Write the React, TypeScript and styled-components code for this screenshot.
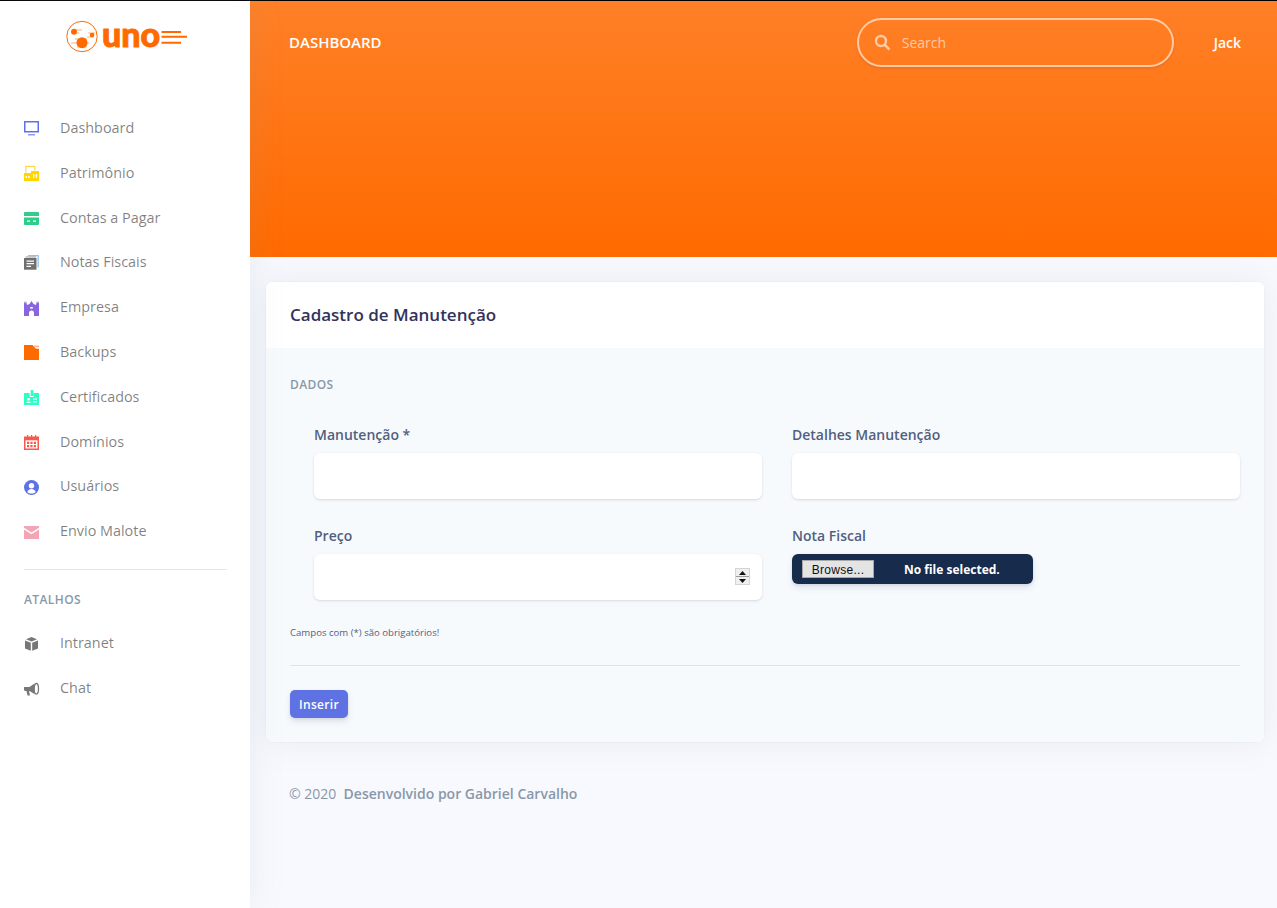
import * as React from 'react'
import styled, { createGlobalStyle } from 'styled-components'

const GlobalStyle = createGlobalStyle`
  html, body {
    margin: 0;
    padding: 0;
    background: #f8f9fe;
    font-family: "Open Sans", "Liberation Sans", sans-serif;
    overflow: hidden;
  }
  * { box-sizing: border-box; }
`

const Page = styled.div`
  display: grid;
  grid-template-columns: 250px 1fr;
  height: 908px;
  border-top: 1px solid #000;
`

const Sidebar = styled.aside`
  background: #fff;
  box-shadow: 0 0 32px rgba(136, 152, 170, 0.15);
  display: flex;
  flex-direction: column;
  z-index: 1;
`

const LogoBox = styled.div`
  height: 104.1px;
  padding: 7px 0 0 66px;
`

const NavItem = styled.a`
  display: flex;
  align-items: center;
  height: 44.8px;
  padding-left: 24px;
  font-size: 14.4px;
  color: rgba(0, 0, 0, 0.5);
`

const NavIcon = styled.span`
  display: flex;
  width: 36px;
  flex: none;
  margin-top: 2px;
`

const Divider = styled.hr`
  border: 0;
  border-top: 1px solid #e4e6ea;
  margin: 16.4px 23px 0 24px;
`

const NavHeading = styled.h6`
  margin: 0;
  padding: 22px 24px 12px;
  font-size: 12px;
  line-height: 16px;
  font-weight: 600;
  letter-spacing: 0.4px;
  color: #8898aa;
`

const Main = styled.main`
  display: flex;
  flex-direction: column;
  min-width: 0;
`

const Banner = styled.header`
  height: 256px;
  background: linear-gradient(180deg, #ff8027 0%, #ff6a00 100%);
  display: flex;
  align-items: flex-start;
  padding: 17px 36px 0 39px;
`

const BannerTitle = styled.div`
  flex: 1;
  line-height: 49px;
  font-size: 15px;
  font-weight: 600;
  color: #fff;
`

const SearchBox = styled.div`
  width: 317px;
  height: 49px;
  border: 2px solid rgba(255, 255, 255, 0.6);
  border-radius: 25px;
  display: flex;
  align-items: center;
  gap: 11px;
  padding-left: 15px;
  color: rgba(255, 255, 255, 0.6);
  font-size: 14px;
  box-shadow: 0 1px 3px rgba(50, 50, 93, 0.15);
`

const UserName = styled.div`
  margin-left: 40px;
  line-height: 50px;
  font-size: 14px;
  font-weight: 600;
  color: #fff;
`

const Content = styled.div`
  padding: 25px 13px 0 16px;
`

const Card = styled.section`
  height: 460px;
  background: #f7fafd;
  border-radius: 6px;
  box-shadow: 0 0 32px rgba(136, 152, 170, 0.15), 0 0 0 1px rgba(0, 0, 0, 0.015);
  overflow: hidden;
`

const CardHead = styled.div`
  height: 66px;
  background: #fff;
  padding: 0 24px 2px;
  display: flex;
  align-items: center;
`

const CardTitle = styled.h3`
  margin: 0;
  font-size: 17px;
  font-weight: 600;
  color: #32325d;
`

const CardBody = styled.div`
  padding: 29px 24px 0 24px;
`

const SectionLabel = styled.h6`
  margin: 0;
  font-size: 12px;
  line-height: 16px;
  font-weight: 600;
  letter-spacing: 0.4px;
  color: #8898aa;
`

const FormGrid = styled.div`
  display: grid;
  grid-template-columns: 448px 448px;
  column-gap: 30px;
  row-gap: 27px;
  padding: 32px 0 0 24px;
`

const Field = styled.div`
  display: flex;
  flex-direction: column;
  align-items: flex-start;
`

const Label = styled.label`
  font-size: 14px;
  line-height: 20px;
  font-weight: 600;
  color: #525f7f;
  margin-bottom: 8px;
`

const InputWrap = styled.div`
  position: relative;
  width: 100%;
  height: 46px;
  background: #fff;
  border-radius: 6px;
  box-shadow: 0 1px 3px rgba(50, 50, 93, 0.15), 0 1px 0 rgba(0, 0, 0, 0.02);
`

const TextInput = styled.input`
  width: 100%;
  height: 100%;
  border: 0;
  background: transparent;
  padding: 0 12px;
  outline: none;
`

const Spinner = styled.span`
  position: absolute;
  right: 12px;
  top: 14px;
  width: 15px;
  height: 17px;
  background: #e2e2e2;
  border: 1px solid #d4d4d4;
  display: flex;
  flex-direction: column;
`

const SpinPart = styled.span`
  flex: 1;
  background: #efefef;
  display: flex;
  align-items: center;
  justify-content: center;
  & + & { border-top: 1px solid #9a9a9a; }
`

const FileBox = styled.div`
  width: 241px;
  height: 30px;
  background: #172b4d;
  border-radius: 6px;
  display: flex;
  align-items: center;
  padding-left: 10px;
  box-shadow: 0 4px 6px rgba(50, 50, 93, 0.11), 0 1px 3px rgba(0, 0, 0, 0.08);
`

const BrowseButton = styled.span`
  width: 72px;
  height: 18px;
  background: #e4e4e4;
  border: 1px solid #a8a8a8;
  font-family: "Liberation Sans", Arial, sans-serif;
  font-size: 12px;
  line-height: 18px;
  text-align: center;
  color: #111;
  letter-spacing: 0.3px;
`

const FileText = styled.span`
  margin-left: 30px;
  color: #fff;
  font-size: 12px;
  font-weight: 700;
`

const Note = styled.p`
  margin: 26px 0 0;
  font-size: 9.6px;
  line-height: 14px;
  color: #525f7f;
`

const FormRule = styled.hr`
  border: 0;
  border-top: 1px solid #dfe3e8;
  margin: 25px 0 24px;
`

const SubmitButton = styled.button`
  display: block;
  width: 58px;
  height: 28px;
  border: 0;
  border-radius: 5px;
  padding: 0;
  background: #5e72e4;
  color: #fff;
  font-family: inherit;
  font-size: 12px;
  font-weight: 600;
  letter-spacing: 0.3px;
  box-shadow: 0 4px 6px rgba(50, 50, 93, 0.11), 0 1px 3px rgba(0, 0, 0, 0.08);
`

const Footer = styled.footer`
  padding: 42px 0 0 23px;
  font-size: 14px;
  line-height: 20px;
  color: #8898aa;
  white-space: pre;
`

const FooterStrong = styled.strong`
  font-weight: 600;
`

const Logo = () => (
  <svg width="124" height="48" viewBox="0 -10 124 48">
    <circle cx="16" cy="18.5" r="15.2" fill="none" stroke="#ff6a00" strokeWidth="1" />
    <path d="M10 12h6M10 15h3M29 15h-7M28 19h-7M21 21h-12M23 25h-18M21 29h-10" stroke="#ffb07c" strokeWidth="1" />
    <circle cx="8" cy="13.700" r="3" fill="#ff6a00" />
    <circle cx="26" cy="17" r="2.300" fill="#ff6a00" />
    <circle cx="16" cy="24.700" r="5.500" fill="#ff6a00" />
    <text x="36" y="28.500" fontFamily="Lato, sans-serif" fontWeight="900" fontSize="34" fill="#ff6a00" stroke="#ff6a00" strokeWidth="0.9">
      uno
    </text>
    <path d="M95.500 14h19.500M95.500 18.700h25.500M95.500 24.700h19.500" stroke="#ff6a00" strokeWidth="2" />
  </svg>
)

const Svg = ({ children }: { children: React.ReactNode }) => (
  <svg width="16" height="16" viewBox="0 0 16 16" style={{ overflow: 'visible' }}>{children}</svg>
)

const IconMonitor = () => (
  <Svg>
    <rect x="0.750" y="1.750" width="13.500" height="10" fill="#fff" stroke="#5e72e4" strokeWidth="1.500" />
    <rect x="4" y="14" width="7" height="1.500" fill="#8b9aee" />
  </Svg>
)
const IconBuilding = () => (
  <Svg>
    <path d="M1.800 7.500V1.300h9V5.500" fill="none" stroke="#ffd84a" strokeWidth="1.200" />
    <path d="M0 8h7v8H0zM7 6h8v10H7z" fill="#ffd600" />
    <path d="M1.500 11h1.500v2H1.500zM4.200 11h1.500v2H4.200zM9 9h1.300v4H9zM11.800 9h1.300v4h-1.300z" fill="#fff" />
  </Svg>
)
const IconCard = () => (
  <Svg>
    <path d="M1 2h13a1 1 0 0 1 1 1v3H0V3a1 1 0 0 1 1-1zM0 7.500h15V14a1 1 0 0 1-1 1H1a1 1 0 0 1-1-1z" fill="#2dce89" />
    <path d="M3 10.500h3v1.200H3zM9 10.500h3v1.200H9z" fill="#fff" />
  </Svg>
)
const IconNotes = () => (
  <Svg>
    <path d="M13 0h1.800v12.500H13.500V1.300H4V0z" fill="#8ec4ee" />
    <path d="M1.500 1.500h10.500v1H1.500z" fill="#999" />
    <rect x="0" y="3" width="12.500" height="11.700" fill="#6f6f6f" />
    <path d="M2.500 5.500h7.500v1.200H2.500zM2.500 8h7.500v1.200H2.500zM2.500 10.700h4.500v1.200H2.500z" fill="#fff" />
  </Svg>
)
const IconCastle = () => (
  <Svg>
    <path d="M0 1l1 2.500L2 1l1 4 2.500-1L7.500 1l2 3L12 5l1-4 1 2.500L15 1v15H10v-3a2.500 2.500 0 0 0-5 0v3H0z" fill="#8965e0" />
    <path d="M6.200 7h2.600v1.600H6.200z" fill="#fff" />
  </Svg>
)
const IconFolder = () => (
  <Svg>
    <path d="M0 1h8.500l3.500 3.800h3V16H0z" fill="#ff6a00" />
    <path d="M9.500 1.500H15v1.800h-4z" fill="#ffb58a" />
  </Svg>
)
const IconBadge = () => (
  <Svg>
    <path d="M6.700 1h2.600v6H6.700z" fill="#2bffc6" />
    <path d="M0 4h5.500v4h4V4H15v12H0z" fill="#2bffc6" />
    <circle cx="4.500" cy="10.300" r="1.400" fill="#fff" />
    <path d="M2.500 12.800h4v1.200h-4zM9 9.500h4v1.200H9zM9 12.300h4v1.300H9z" fill="#fff" />
  </Svg>
)
const IconCalendar = () => (
  <Svg>
    <path d="M0 2.500h15V16H0z" fill="#f7594e" />
    <path d="M3 1h1.200v2H3zM7 1h1.200v2H7zM11 1h1.200v2H11z" fill="#f7594e" />
    <path d="M1.500 6.300h12v8.200h-12z" fill="#fff" />
    <path d="M3 7.800h2.200V10H3zM6.400 7.800h2.200V10H6.400zM9.800 7.800H12V10H9.800zM3 11h2.200v2.200H3zM6.400 11h2.200v2.200H6.400zM9.800 11H12v2.200H9.800z" fill="#f7594e" />
  </Svg>
)
const IconUser = () => (
  <Svg>
    <circle cx="7.500" cy="8.500" r="7.500" fill="#5e72e4" />
    <circle cx="7.500" cy="6.700" r="2.700" fill="#fff" />
    <path d="M3.300 13c.6-2 2.300-3 4.200-3s3.600 1 4.200 3c-1 1-2.600 1.600-4.200 1.600s-3.200-.6-4.200-1.600z" fill="#fff" />
  </Svg>
)
const IconMail = () => (
  <Svg>
    <path d="M0 2h15v1.800L7.500 8.500 0 3.800z" fill="#f3a4b5" />
    <path d="M0 5.500l7.500 4.700L15 5.500V15H0z" fill="#f3a4b5" />
  </Svg>
)
const IconBox = () => (
  <Svg>
    <path d="M7.500 1l5.500 2.200L7.500 5.500 2 3.200z" fill="#777" />
    <path d="M1 4.500l5.800 2.300v8L1 12.500zM14 4.500L8.200 6.800v8l5.800-2.300z" fill="#777" />
  </Svg>
)
const IconMegaphone = () => (
  <Svg>
    <path d="M0 6h5.500l5-3.500v10.500l-5-3H5l1 4.500H3.500L2.500 10H1.500A1.500 1.500 0 0 1 0 8.500z" fill="#777" />
    <ellipse cx="12.300" cy="7.800" rx="2.200" ry="5.300" fill="none" stroke="#777" strokeWidth="1.300" />
  </Svg>
)

const IconSearch = () => (
  <svg width="17" height="17" viewBox="0 0 17 17">
    <circle cx="7" cy="7" r="5" fill="none" stroke="currentColor" strokeWidth="2.400" />
    <path d="M10.800 10.800l4.700 4.700" stroke="currentColor" strokeWidth="2.600" />
  </svg>
)

const mainNav: [React.ComponentType, string][] = [
  [IconMonitor, 'Dashboard'],
  [IconBuilding, 'Patrimônio'],
  [IconCard, 'Contas a Pagar'],
  [IconNotes, 'Notas Fiscais'],
  [IconCastle, 'Empresa'],
  [IconFolder, 'Backups'],
  [IconBadge, 'Certificados'],
  [IconCalendar, 'Domínios'],
  [IconUser, 'Usuários'],
  [IconMail, 'Envio Malote'],
]

const shortcuts: [React.ComponentType, string][] = [
  [IconBox, 'Intranet'],
  [IconMegaphone, 'Chat'],
]

const renderNav = (items: [React.ComponentType, string][]) =>
  items.map(([Icon, label]) => (
    <NavItem key={label}>
      <NavIcon><Icon /></NavIcon>
      {label}
    </NavItem>
  ))

export default function App() {
  return (
    <>
      <GlobalStyle />
      <Page>
        <Sidebar>
          <LogoBox><Logo /></LogoBox>
          {renderNav(mainNav)}
          <Divider />
          <NavHeading>ATALHOS</NavHeading>
          {renderNav(shortcuts)}
        </Sidebar>
        <Main>
          <Banner>
            <BannerTitle>DASHBOARD</BannerTitle>
            <SearchBox><IconSearch />Search</SearchBox>
            <UserName>Jack</UserName>
          </Banner>
          <Content>
            <Card>
              <CardHead><CardTitle>Cadastro de Manutenção</CardTitle></CardHead>
              <CardBody>
                <SectionLabel>DADOS</SectionLabel>
                <FormGrid>
                  <Field>
                    <Label>Manutenção *</Label>
                    <InputWrap><TextInput /></InputWrap>
                  </Field>
                  <Field>
                    <Label>Detalhes Manutenção</Label>
                    <InputWrap><TextInput /></InputWrap>
                  </Field>
                  <Field>
                    <Label>Preço</Label>
                    <InputWrap>
                      <TextInput />
                      <Spinner>
                        <SpinPart>
                          <svg width="7" height="4" viewBox="0 0 7 4"><path d="M3.500 0L7 4H0z" fill="#111" /></svg>
                        </SpinPart>
                        <SpinPart>
                          <svg width="7" height="4" viewBox="0 0 7 4"><path d="M0 0h7L3.500 4z" fill="#111" /></svg>
                        </SpinPart>
                      </Spinner>
                    </InputWrap>
                  </Field>
                  <Field>
                    <Label>Nota Fiscal</Label>
                    <FileBox>
                      <BrowseButton>Browse...</BrowseButton>
                      <FileText>No file selected.</FileText>
                    </FileBox>
                  </Field>
                </FormGrid>
                <Note>Campos com (*) são obrigatórios!</Note>
                <FormRule />
                <SubmitButton>Inserir</SubmitButton>
              </CardBody>
            </Card>
            <Footer>
              {'© 2020  '}<FooterStrong>Desenvolvido por Gabriel Carvalho</FooterStrong>
            </Footer>
          </Content>
        </Main>
      </Page>
    </>
  )
}
